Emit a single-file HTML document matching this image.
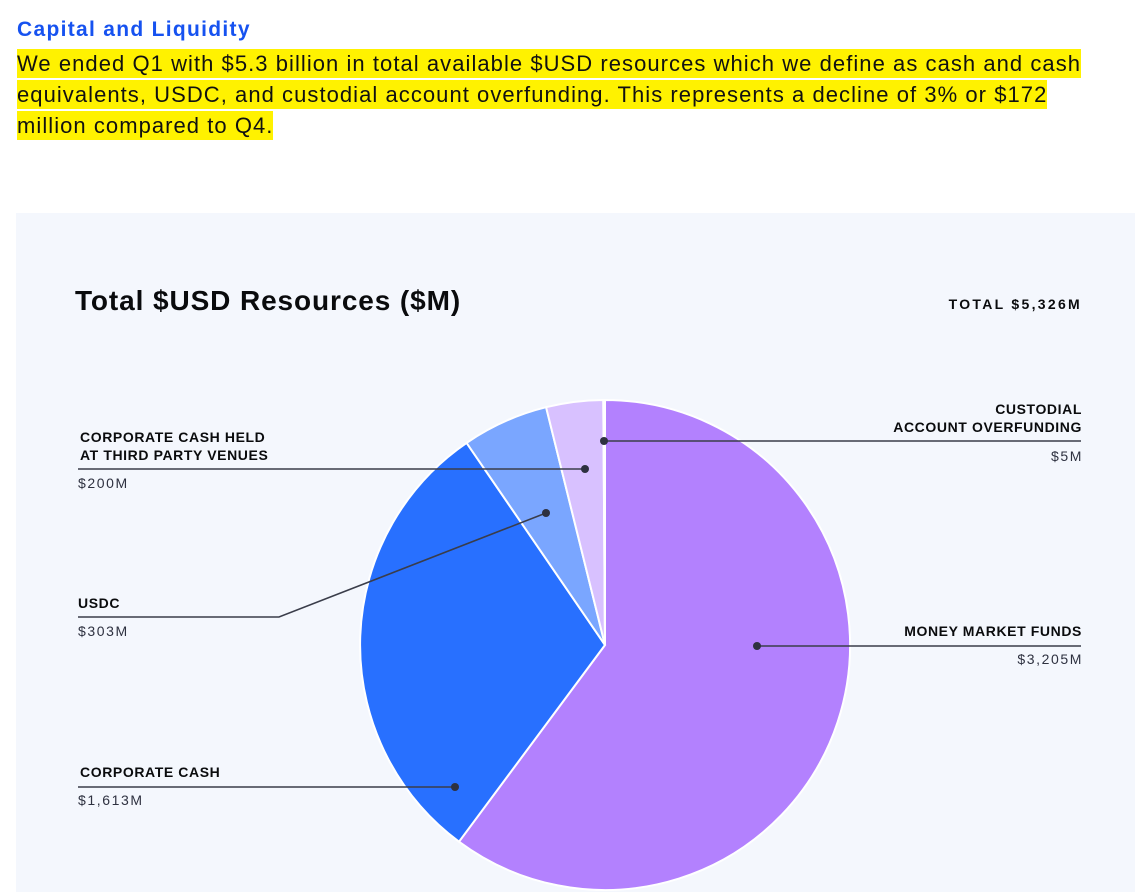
<!DOCTYPE html>
<html><head><meta charset="utf-8"><style>
html,body{margin:0;padding:0;background:#fff;width:1135px;height:892px;overflow:hidden;font-family:"Liberation Sans",sans-serif}
.h{position:absolute;left:17px;top:18px;font-size:21px;font-weight:bold;color:#1652f0;letter-spacing:1.3px}
.p{position:absolute;left:17px;top:48px;width:1110px;font-size:22px;line-height:31px;color:#111;letter-spacing:1.05px;white-space:nowrap}
.p span{background:#fff200;padding:2px 0}
.panel{position:absolute;left:16px;top:213px;width:1119px;height:679px;background:#f4f7fd}
</style></head><body>
<div class="h">Capital and Liquidity</div>
<div class="p"><span>We ended Q1 with $5.3 billion in total available $USD resources which we define as cash and cash</span><br><span>equivalents, USDC, and custodial account overfunding. This represents a decline of 3% or $172</span><br><span>million compared to Q4.</span></div>
<div class="panel"></div>
<svg style="position:absolute;left:0;top:0" width="1135" height="892" viewBox="0 0 1135 892" font-family="Liberation Sans, sans-serif">
<g stroke="#fff" stroke-width="2">
<path d="M605 645 L605 400 A245 245 0 1 1 459.0 841.7 Z" fill="#b381fe"/>
<path d="M605 645 L459.0 841.7 A245 245 0 0 1 466.6 442.9 Z" fill="#2870ff"/>
<path d="M605 645 L466.6 442.9 A245 245 0 0 1 546.1 407.2 Z" fill="#7aa6ff"/>
<path d="M605 645 L546.1 407.2 A245 245 0 0 1 603.3 400 Z" fill="#d8c1ff"/>
<path d="M605 645 L603.3 400 A245 245 0 0 1 605 400 Z" fill="#b381fe"/>
</g>
<g stroke="#3a3d4a" stroke-width="1.6" fill="none">
<line x1="604" y1="441" x2="1081" y2="441"/>
<line x1="78" y1="469" x2="585" y2="469"/>
<polyline points="546,513 279,617 78,617"/>
<line x1="757" y1="646" x2="1081" y2="646"/>
<line x1="78" y1="787" x2="455" y2="787"/>
</g>
<g fill="#2e3140">
<circle cx="604" cy="441" r="4"/><circle cx="585" cy="469" r="4"/><circle cx="546" cy="513" r="4"/><circle cx="757" cy="646" r="4"/><circle cx="455" cy="787" r="4"/>
</g>
<text x="75" y="310" font-size="28" font-weight="bold" fill="#0a0b0d" letter-spacing="0.9">Total $USD Resources ($M)</text>
<g font-size="14" font-weight="bold" fill="#0a0b0d" letter-spacing="0.6">
<text x="1082" y="309" text-anchor="end" letter-spacing="2.3">TOTAL $5,326M</text>
<text x="1082" y="414" text-anchor="end">CUSTODIAL</text>
<text x="1082" y="432" text-anchor="end">ACCOUNT OVERFUNDING</text>
<text x="80" y="442">CORPORATE CASH HELD</text>
<text x="80" y="460">AT THIRD PARTY VENUES</text>
<text x="78" y="608">USDC</text>
<text x="1082" y="636" text-anchor="end">MONEY MARKET FUNDS</text>
<text x="80" y="777">CORPORATE CASH</text>
</g>
<g font-size="14" fill="#2e3140" letter-spacing="1.6">
<text x="1083" y="461" text-anchor="end">$5M</text>
<text x="78" y="488">$200M</text>
<text x="78" y="636">$303M</text>
<text x="1083" y="664" text-anchor="end">$3,205M</text>
<text x="78" y="805">$1,613M</text>
</g>
</svg>
</body></html>
